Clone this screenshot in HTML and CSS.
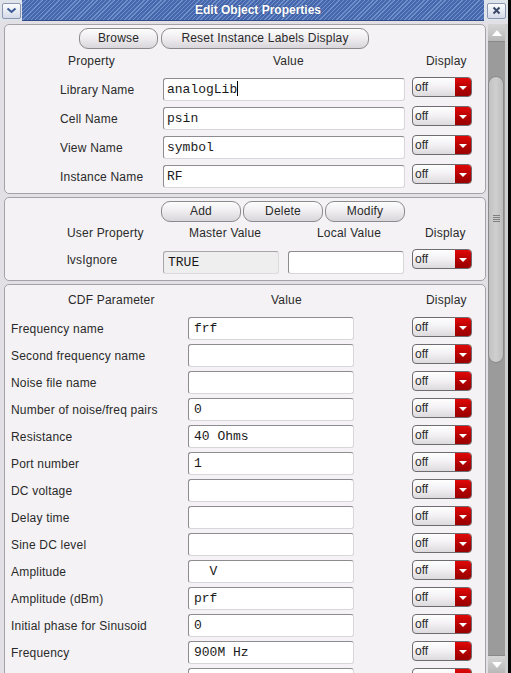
FILE: index.html
```html
<!DOCTYPE html>
<html>
<head>
<meta charset="utf-8">
<link rel="stylesheet" href="styles.css">
</head>
<body>
<div class="window">
  <div class="titlebar">
    <div class="tb-side left">
      <div class="tb-btn"><svg width="11" height="7" viewBox="0 0 11 7"><path d="M1.5 1.5 L5.5 5 L9.5 1.5" fill="none" stroke="#3a5a96" stroke-width="2"/></svg></div>
    </div>
    <div class="tb-title">Edit Object Properties</div>
    <div class="tb-side right">
      <div class="tb-btn"><svg width="9" height="9" viewBox="0 0 9 9"><path d="M1.5 1.5 L7.5 7.5 M7.5 1.5 L1.5 7.5" stroke="#3a4a6a" stroke-width="2"/></svg></div>
    </div>
  </div>
  <div class="main">
    <div class="content">
      <div class="group g1">
        <div class="btnrow br1">
          <button class="btn w-browse">Browse</button>
          <button class="btn w-reset">Reset Instance Labels Display</button>
        </div>
        <div class="grid1 head">
          <div class="h-prop">Property</div>
          <div class="h-val">Value</div>
          <div class="h-disp">Display</div>
        </div>
        <div class="grid1 rows">
          <div class="lbl">Library Name</div><div class="in">analogLib<span class="caret"></span></div><div class="dd"><span class="dd-text">off</span><span class="dd-arrow"><i></i></span></div>
          <div class="lbl">Cell Name</div><div class="in">psin</div><div class="dd"><span class="dd-text">off</span><span class="dd-arrow"><i></i></span></div>
          <div class="lbl">View Name</div><div class="in">symbol</div><div class="dd"><span class="dd-text">off</span><span class="dd-arrow"><i></i></span></div>
          <div class="lbl">Instance Name</div><div class="in">RF</div><div class="dd"><span class="dd-text">off</span><span class="dd-arrow"><i></i></span></div>
        </div>
      </div>

      <div class="group g2">
        <div class="btnrow br2">
          <button class="btn w-add">Add</button>
          <button class="btn w-del">Delete</button>
          <button class="btn w-mod">Modify</button>
        </div>
        <div class="grid2 head">
          <div class="h-user">User Property</div>
          <div class="h-master">Master Value</div>
          <div class="h-local">Local Value</div>
          <div class="h-disp2">Display</div>
        </div>
        <div class="grid2 rows2">
          <div class="lbl">lvsIgnore</div>
          <div><div class="in ro">TRUE</div></div>
          <div><div class="in local"></div></div>
          <div class="dd"><span class="dd-text">off</span><span class="dd-arrow"><i></i></span></div>
        </div>
      </div>

      <div class="group g3">
        <div class="grid3 head3">
          <div class="h-cdf">CDF Parameter</div>
          <div class="h-val3">Value</div>
          <div class="h-disp3">Display</div>
        </div>
        <div class="grid3 rows3">
          <div class="lbl">Frequency name</div><div class="in">frf</div><div class="dd"><span class="dd-text">off</span><span class="dd-arrow"><i></i></span></div>
          <div class="lbl">Second frequency name</div><div class="in"></div><div class="dd"><span class="dd-text">off</span><span class="dd-arrow"><i></i></span></div>
          <div class="lbl">Noise file name</div><div class="in"></div><div class="dd"><span class="dd-text">off</span><span class="dd-arrow"><i></i></span></div>
          <div class="lbl">Number of noise/freq pairs</div><div class="in">0</div><div class="dd"><span class="dd-text">off</span><span class="dd-arrow"><i></i></span></div>
          <div class="lbl">Resistance</div><div class="in">40 Ohms</div><div class="dd"><span class="dd-text">off</span><span class="dd-arrow"><i></i></span></div>
          <div class="lbl">Port number</div><div class="in">1</div><div class="dd"><span class="dd-text">off</span><span class="dd-arrow"><i></i></span></div>
          <div class="lbl">DC voltage</div><div class="in"></div><div class="dd"><span class="dd-text">off</span><span class="dd-arrow"><i></i></span></div>
          <div class="lbl">Delay time</div><div class="in"></div><div class="dd"><span class="dd-text">off</span><span class="dd-arrow"><i></i></span></div>
          <div class="lbl">Sine DC level</div><div class="in"></div><div class="dd"><span class="dd-text">off</span><span class="dd-arrow"><i></i></span></div>
          <div class="lbl">Amplitude</div><div class="in">&nbsp;&nbsp;V</div><div class="dd"><span class="dd-text">off</span><span class="dd-arrow"><i></i></span></div>
          <div class="lbl">Amplitude (dBm)</div><div class="in">prf</div><div class="dd"><span class="dd-text">off</span><span class="dd-arrow"><i></i></span></div>
          <div class="lbl">Initial phase for Sinusoid</div><div class="in">0</div><div class="dd"><span class="dd-text">off</span><span class="dd-arrow"><i></i></span></div>
          <div class="lbl">Frequency</div><div class="in">900M Hz</div><div class="dd"><span class="dd-text">off</span><span class="dd-arrow"><i></i></span></div>
          <div class="lbl"></div><div class="in"></div><div class="dd"><span class="dd-text"></span><span class="dd-arrow"><i></i></span></div>
        </div>
      </div>
    </div>
    <div class="scroll">
      <div class="sb-up"><i></i></div>
      <div class="sb-track">
        <div class="sb-thumb"><div class="grip"></div></div>
      </div>
      <div class="sb-down"><i></i></div>
    </div>
  </div>
</div>
</body>
</html>
```

FILE: styles.css
```css
html, body {
  margin: 0;
  padding: 0;
}
body {
  width: 511px;
  height: 673px;
  overflow: hidden;
  background: #050505;
  font-family: "Liberation Sans", Arial, sans-serif;
  font-size: 12px;
  color: #2a2a2a;
}
.window {
  width: 508px;
  height: 673px;
  background: #e2e0e4;
  display: flex;
  flex-direction: column;
  overflow: hidden;
}
.titlebar {
  height: 21px;
  display: flex;
  flex: none;
}
.tb-side {
  background: #dfe3ea;
  display: flex;
  align-items: center;
  justify-content: center;
}
.tb-side.left { width: 22px; }
.tb-side.right { width: 24px; }
.tb-btn {
  width: 19px;
  height: 16px;
  box-sizing: border-box;
  border: 1px solid #8b97b0;
  border-radius: 2px;
  background: linear-gradient(#fbfcfe, #d3dae8);
  display: flex;
  align-items: center;
  justify-content: center;
}
.tb-title {
  flex: 1;
  background: repeating-linear-gradient(135deg, #4868ae 0px, #4868ae 2px, #7090cc 2px, #7090cc 3px);
  color: #fff;
  font-weight: bold;
  font-size: 12px;
  text-align: center;
  line-height: 21px;
  padding-left: 10px;
  box-sizing: border-box;
  border-bottom: 1px solid #2f4c86;
  text-shadow: 0 0 2px #2a4680;
}
.main {
  flex: 1;
  min-height: 0;
  display: flex;
  padding-top: 3px;
  gap: 2px;
}
.content {
  width: 482px;
  padding-left: 4px;
  display: flex;
  flex-direction: column;
  gap: 3px;
  overflow: hidden;
}
.group {
  border: 1px solid #a4a2a6;
  border-radius: 5px;
  background: #f4f2f5;
  flex: none;
}
.g1 { box-sizing: border-box; height: 170px; }
.g2 { height: 84px; box-sizing: border-box; }
.g3 { flex: none; }

.btnrow {
  display: flex;
  height: 21px;
}
.br1 { margin-top: 3px; padding-left: 74px; gap: 3px; }
.br2 { margin-top: 3px; padding-left: 156px; gap: 2px; }
.btn {
  height: 21px;
  box-sizing: border-box;
  border: 1px solid #8c8a8e;
  border-radius: 9px;
  background: linear-gradient(#fdfdfd 0%, #eeecef 50%, #d8d6da 100%);
  font-family: "Liberation Sans", Arial, sans-serif;
  font-size: 12px;
  letter-spacing: 0.2px;
  color: #2a2a2a;
  padding: 0;
  margin: 0;
  line-height: 19px;
}
.w-browse { width: 79px; }
.w-reset { width: 208px; }
.w-add { width: 80px; }
.w-del { width: 80px; }
.w-mod { width: 80px; }

.head { height: 13px; line-height: 13px; letter-spacing: 0.2px; }
.grid1 {
  display: grid;
  grid-template-columns: 96px 242px 60px;
  column-gap: 7px;
  padding-left: 55px;
}
.g1 .head { margin-top: 6px; }
.h-prop { padding-left: 8px; }
.h-val { padding-left: 110px; }
.h-disp { padding-left: 14px; }
.rows {
  margin-top: 10px;
  row-gap: 6px;
  grid-auto-rows: 23px;
}
.lbl {
  display: flex;
  align-items: center;
  white-space: nowrap;
  letter-spacing: 0.2px;
}
.in {
  height: 23px;
  box-sizing: border-box;
  border: 1px solid;
  border-color: #8e8c90 #d8d6da #d8d6da #8e8c90;
  border-radius: 3px;
  background: #fff;
  font-family: "Liberation Mono", "Courier New", monospace;
  font-size: 13px;
  line-height: 21px;
  padding-left: 3px;
  color: #1a1a1a;
  white-space: pre;
  overflow: hidden;
}
.caret {
  display: inline-block;
  width: 1px;
  height: 15px;
  background: #000;
  vertical-align: -3px;
}
.dd {
  width: 60px;
  height: 20px;
  box-sizing: border-box;
  border: 1px solid #6e6c70;
  border-radius: 4px;
  display: flex;
  overflow: hidden;
  background: linear-gradient(#ffffff, #f2f0f3 50%, #dcdadd);
  align-self: start;
  margin-top: -1px;
}
.dd-text {
  flex: 1;
  padding-left: 2px;
  line-height: 18px;
  font-size: 12px;
  color: #2a2a2a;
}
.dd-arrow {
  width: 16px;
  background: linear-gradient(#e00808, #b00000 60%, #9a0000);
  display: flex;
  align-items: center;
  justify-content: center;
}
.dd-arrow i {
  width: 0;
  height: 0;
  border-left: 4px solid transparent;
  border-right: 4px solid transparent;
  border-top: 4px solid #fff;
  margin-top: 1px;
}

/* group 2 */
.grid2 {
  display: grid;
  grid-template-columns: 96px 125px 124px 60px;
  padding-left: 62px;
}
.g2 .head { margin-top: 5px; }
.h-master { padding-left: 26px; }
.h-local { padding-left: 29px; }
.h-disp2 { padding-left: 13px; }
.rows2 {
  margin-top: 11px;
  height: 23px;
}
.rows2 .lbl { align-items: flex-start; padding-top: 2px; }
.in.ro {
  width: 116px;
  background: #eeeeee;
  border-color: #a8a6aa #dddbde #dddbde #a8a6aa;
  padding-left: 4px;
}
.in.local { width: 116px; }
.rows2 .dd { margin-top: -2px; }

/* group 3 */
.grid3 {
  display: grid;
  grid-template-columns: 177px 166px 58px 60px;
  padding-left: 6px;
}
.head3 {
  margin-top: 9px;
  height: 13px;
  line-height: 13px;
  letter-spacing: 0.2px;
}
.h-cdf { padding-left: 57px; }
.h-val3 { padding-left: 83px; grid-column: 2 / 4; }
.h-disp3 { padding-left: 14px; }
.rows3 {
  margin-top: 10px;
  row-gap: 4px;
  grid-auto-rows: 23px;
}
.rows3 .dd { grid-column: 4; margin-top: 0; }
.rows3 .in { padding-left: 5px; }

/* scrollbar */
.scroll {
  width: 20px;
  box-sizing: border-box;
  border-right: 3px solid #cfcfcf;
  background: #9b9b9b;
  display: flex;
  flex-direction: column;
}
.sb-up, .sb-down {
  height: 17px;
  background: linear-gradient(#d6d6d6, #b8b8b8);
  border-bottom: 1px solid #8a8a8a;
  display: flex;
  align-items: center;
  justify-content: center;
  flex: none;
}
.sb-down {
  border-bottom: none;
  border-top: 1px solid #8a8a8a;
}
.sb-up i {
  width: 0; height: 0;
  border-left: 5px solid transparent;
  border-right: 5px solid transparent;
  border-bottom: 6px solid #fff;
}
.sb-down i {
  width: 0; height: 0;
  border-left: 5px solid transparent;
  border-right: 5px solid transparent;
  border-top: 6px solid #fff;
}
.sb-track {
  flex: 1;
  padding-top: 34px;
}
.sb-thumb {
  width: 16px;
  height: 287px;
  box-sizing: border-box;
  border: 1px solid #8a8a8a;
  border-radius: 8px;
  background: linear-gradient(90deg, #c2c2c2, #cfcfcf 50%, #bdbdbd);
  display: flex;
  justify-content: center;
  padding-top: 138px;
}
.grip {
  width: 7px;
  height: 8px;
  background: repeating-linear-gradient(#7e7e7e 0px, #7e7e7e 1px, transparent 1px, transparent 2px);
}
```
